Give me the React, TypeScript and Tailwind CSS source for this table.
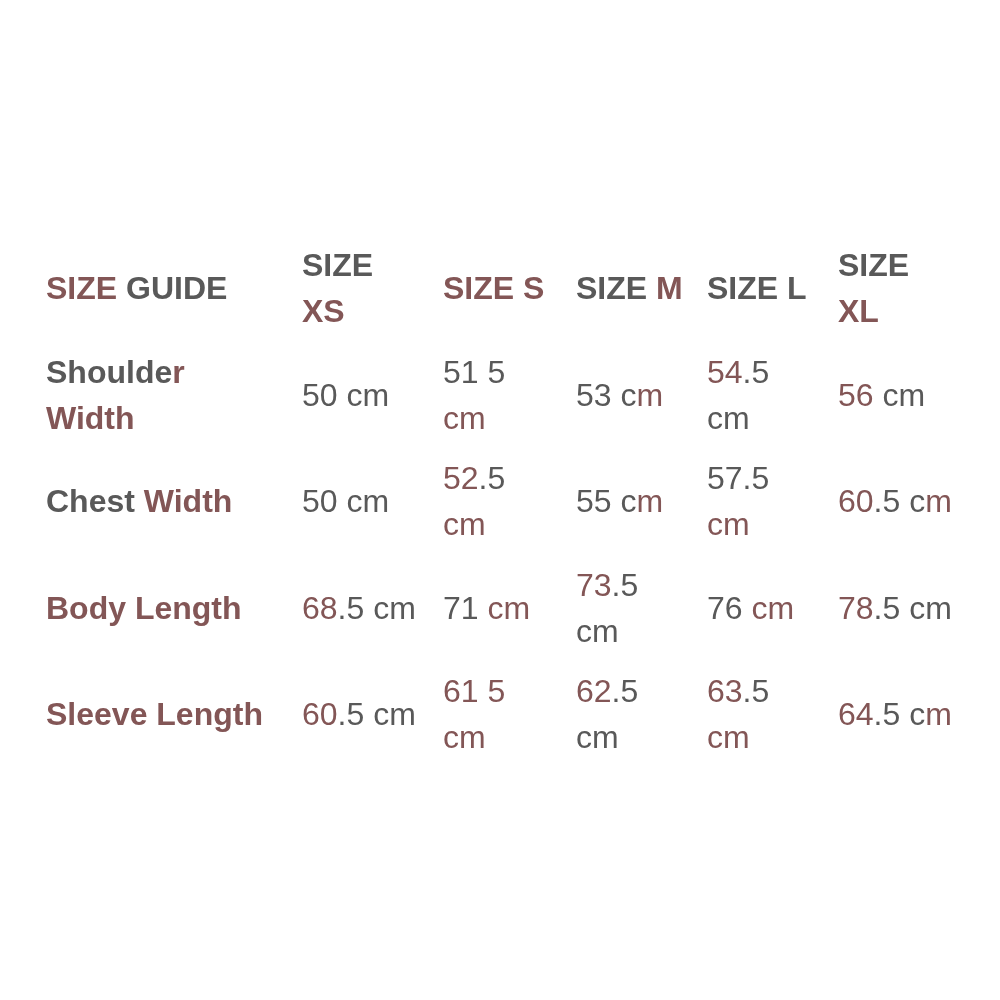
import React from 'react';

// *text* = the reddish tone, everything else is the grey one
const header = ['*SIZE* GUIDE', 'SIZE *XS*', '*SIZE S*', 'SIZE *M*', 'SIZE L', 'SIZE *XL*'];

const rows: string[][] = [
  ['Shoulde*r* *Width*', '50 cm', '51 5 *cm*', '53 c*m*', '*54*.5 cm', '*56* cm'],
  ['Chest *Width*', '50 cm', '*52*.5 *cm*', '55 c*m*', '57.5 *cm*', '*60*.5 c*m*'],
  ['*Body Length*', '*68*.5 cm', '71 *cm*', '*73*.5 cm', '76 *cm*', '*78*.5 cm'],
  ['*Sleeve Length*', '*60*.5 cm', '*61 5* *cm*', '*62*.5 cm', '*63*.5 *cm*', '*64*.5 c*m*'],
];

// content widths per column, so the cells wrap like the original table
const colWidth = ['w-[228px]', 'w-[118px]', 'w-[110px]', 'w-[110px]', 'w-[110px]', 'w-[117px]'];

const Tinted: React.FC<{ text: string }> = ({ text }) => {
  const parts = text.split('*');
  return (
    <>
      {parts.map((p, i) =>
        // keep words in their own spans so a wrapped line never shares a box
        p.split(/(\s+)/).map((w, j) =>
          w === '' ? null : /^\s+$/.test(w) ? (
            ' '
          ) : (
            <span key={`${i}-${j}`} className={i % 2 === 1 ? 'text-[#835656]' : ''}>
              {w}
            </span>
          )
        )
      )}
    </>
  );
};

const Cell: React.FC<{ text: string; col: number; bold?: boolean }> = ({ text, col, bold }) => {
  return (
    <div className="flex items-center py-[7.25px] pl-[10px]">
      <div className={`${colWidth[col]} ${bold ? 'font-bold' : ''}`}>
        <Tinted text={text} />
      </div>
    </div>
  );
};

const App: React.FC = () => {
  return (
    <div className="h-[1000px] w-[1000px] bg-white pt-[235px] pl-[36px] font-['Liberation_Sans',Arial,sans-serif] text-[32px] leading-[46px] text-[#595959] blur-[0.5px]">
      <div className="grid w-fit grid-cols-[256px_141px_133px_131px_131px_140px]">
        {header.map((h, i) => (
          <Cell key={`h${i}`} text={h} col={i} bold />
        ))}
        {rows.map((row, r) =>
          row.map((v, c) => <Cell key={`${r}-${c}`} text={v} col={c} bold={c === 0} />)
        )}
      </div>
    </div>
  );
};

export default App;
